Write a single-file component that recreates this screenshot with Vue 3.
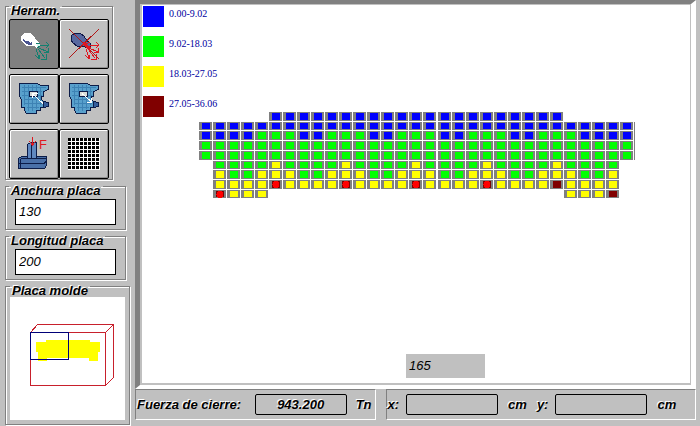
<script setup>
import { ref } from 'vue'

const width = ref('130')
const length = ref('200')
const reading = ref('165')
const tool = ref('inject')

const ranges = [
  { label: '0.00-9.02', tone: 'blue' },
  { label: '9.02-18.03', tone: 'green' },
  { label: '18.03-27.05', tone: 'yellow' },
  { label: '27.05-36.06', tone: 'maroon' }
]

// One string per row of cells: b, g, y, m are the ranges, r marks an injection point.
const rows = [
  '.....bbbbbbbbbbbbbbbbbbbbb.....',
  'bbbbbbbbbbbbbbbbbbbbbbbbbbbbbbb',
  'bbbbgggbbgggbbgggbbgggbbgggbbbb',
  'ggggggggggggggggggggggggggggggg',
  'ggggggggggggggggggggggggggggggg',
  '.ggggyggggyggggyggggyggggygggg.',
  '.yggyyyggyyyggyyyggyyyggyyyggy.',
  '.yyyyryyyyryyyyryyyyryyyymyyyy.',
  '.ryyy.....................yyym.'
]
const tones = { b: 'blue', g: 'green', y: 'yellow', m: 'maroon', r: 'maroon' }

const cells = rows.flatMap((row, j) =>
  [...row].map((k, i) => ({
    id: `${j}-${i}`,
    k,
    tone: tones[k],
    x: Math.round(i * 14.03),
    y: Math.round(j * 9.7),
    h: Math.round((j + 1) * 9.7) - Math.round(j * 9.7) - 1
  }))
).filter(c => c.k !== '.')
</script>

<template>
  <div class="app">
    <aside class="side">
      <fieldset class="group tools">
        <legend>Herram.</legend>
        <div class="buttons">
          <button type="button" aria-label="Inyectar" :class="{ on: tool === 'inject' }" @click="tool = 'inject'">
            <svg viewBox="0 0 48 48">
              <path d="M11 17l1-2 3-2h5l4 3 3 5 3 2v4l-3 1-3-2h-7l-4-3-2-3z" fill="#fff" />
              <path d="M13 19l2 2h3l2 2 2-1v3h-3l-3-1-3-3z" fill="#4a5490" />
              <path d="M27 23l3 1v3l-3 1z" fill="#d8f4ee" />
              <g class="line" stroke="#128070">
                <path d="M26 24l4-1M27 28l3-2M30 25h9M36 22l3 3-3 3M29 28l9 4M38 28v4h-4M28 29l7 9M36 34v5h-5M26 29l3 9M25 35l4 4 1-4" />
              </g>
            </svg>
          </button>
          <button type="button" aria-label="Anular inyección" :class="{ on: tool === 'none' }" @click="tool = 'none'">
            <svg viewBox="0 0 48 48">
              <path d="M11 17l1-2 3-2h5l4 3 3 5 3 2v4l-3 1-3-2h-7l-4-3-2-3z" fill="#5868a0" stroke="#101848" />
              <g class="line" stroke="#e01820">
                <path d="M26 24l4-2M27 28l3-2M30 25h9M36 22l3 3-3 3M29 28l9 4M38 28v4h-4M28 29l7 9M36 34v5h-5M26 29l3 9M25 35l4 4 1-4" />
              </g>
              <path d="M9 9l30 30M39 9L9 38" stroke="#b01818" />
              <path d="M23 23l7 6" stroke="#e01820" stroke-width="3" />
            </svg>
          </button>
          <button v-for="n in 2" :key="n" type="button" :aria-label="n === 1 ? 'Mover hacia dentro' : 'Mover hacia fuera'">
            <svg viewBox="0 0 48 48">
              <path d="M9.500 8.500h18l3 2h8v4l-5 2v5h-2v3l2 2v6h-3v3h-4v3h-10l-2-3v-3h-3v-8l-2-3z" fill="#58a0cc" stroke="#0c1c48" />
              <g class="line" stroke="#3d82b4">
                <path d="M12 12.500h24M12 16.500h20M12 20.500h20M14 24.500h17M14 28.500h18M17 32.500h12M14.500 10v20M18.500 10v26M22.500 10v26M26.500 10v24M30.500 12v18" />
              </g>
              <path d="M33.500 26.500l5 1v4l-5 1z" fill="#365f9c" stroke="#0c1c48" />
              <rect x="19.500" y="16.500" width="8" height="5" fill="#d8dcd8" stroke="#0c1c48" />
              <path v-if="n === 1" d="M22 18.500l11 10M22.500 23v-4.500h5" stroke="#fff" />
              <path v-else d="M22 18.500l9 8M31.500 23v4.500h-5" stroke="#fff" />
            </svg>
          </button>
          <button type="button" aria-label="Fuerza">
            <svg viewBox="0 0 48 48">
              <path d="M8.500 28.500l3-2h25v9l-2 3h-26z" fill="#4a70a8" stroke="#0c1c48" />
              <path d="M9 33.500h25l3-3M11 28.500h25M10.500 29v9" stroke="#0c1c48" />
              <path d="M17.500 14.500l3-2h6v16h-9z" fill="#6088c0" stroke="#0c1c48" />
              <path d="M21.500 15v13" stroke="#0c1c48" />
              <path d="M22.500 7v8M19 11l3.500 4 3.500-4" stroke="#e01820" />
              <text x="29" y="19" fill="#e01820" class="force">F</text>
            </svg>
          </button>
          <button type="button" aria-label="Malla">
            <svg viewBox="0 0 48 48">
              <rect x="8" y="8" width="32" height="32" fill="#fff" />
              <template v-for="r in 8" :key="r">
                <rect v-for="c in 8" :key="c" :x="c * 4 + 4" :y="r * 4 + 4" width="3" height="3" fill="#000" />
              </template>
            </svg>
          </button>
        </div>
      </fieldset>

      <fieldset class="group size">
        <legend><label for="plate-width">Anchura placa</label></legend>
        <input id="plate-width" v-model="width" type="text" />
      </fieldset>

      <fieldset class="group size">
        <legend><label for="plate-length">Longitud placa</label></legend>
        <input id="plate-length" v-model="length" type="text" />
      </fieldset>

      <fieldset class="group plate">
        <legend>Placa molde</legend>
        <svg class="preview" viewBox="0 0 115 123" role="img" aria-label="Placa molde">
          <path d="M26 45h10v-2h44v2h10v10h-2v9h-9v-3H37v3h-9v-9h-2z" fill="#ff0" />
          <path d="M20.500 35.500h75v53h-75zM20.500 35.500l7-8h76v53l-8 8M95.500 35.500l8-8" stroke="#c8202c" />
          <path d="M20.500 35.500h38v27h-38z" stroke="#000078" />
        </svg>
      </fieldset>
    </aside>

    <main class="main">
      <section class="well">
        <div class="canvas">
          <ul class="ranges">
            <li v-for="r in ranges" :key="r.label">
              <span class="swatch" :class="r.tone"></span>
              <span>{{ r.label }}</span>
            </li>
          </ul>
          <svg class="map" width="436" height="87" viewBox="0 0 436 87" role="img" aria-label="Mapa de presiones">
            <g v-for="c in cells" :key="c.id">
              <rect :x="c.x" :y="c.y" width="13" :height="c.h" fill="#808080" />
              <rect :x="c.x + 3" :y="c.y + 1" width="8" :height="c.h - 2" :class="c.tone" />
              <circle v-if="c.k === 'r'" :cx="c.x + 7" :cy="c.y + 4.5" r="3.5" fill="#f00" />
            </g>
            <rect x="435" y="10" width="1" height="38" fill="#808080" />
          </svg>
          <input v-model="reading" class="reading" type="text" aria-label="Lectura" />
        </div>
      </section>

      <footer class="status">
        <div class="panel force-panel">
          <label for="force">Fuerza de cierre:</label>
          <output id="force" class="box">943.200</output>
          <span class="unit">Tn</span>
        </div>
        <div class="panel coords">
          <label for="pos-x">x:</label>
          <output id="pos-x" class="box"></output>
          <span class="unit">cm</span>
          <label for="pos-y">y:</label>
          <output id="pos-y" class="box"></output>
          <span class="unit">cm</span>
        </div>
      </footer>
    </main>
  </div>
</template>

<style>
body {
  background: #c0c0c0;
}
</style>

<style scoped>
* {
  box-sizing: border-box;
}

.app {
  display: flex;
  min-height: 100vh;
  background: #c0c0c0;
  color: #000;
  font: italic bold 13px/13px "Liberation Sans", Arial, sans-serif;
}

.side {
  flex: none;
  width: 135px;
  padding: 0 5px;
}

.group {
  min-width: 0;
  margin: 0 4px 0 0;
  padding: 6px 3px 0;
  border: 1px solid #808080;
  box-shadow: 1px 1px 0 #fff, inset 1px 1px 0 #fff;
}

legend {
  box-sizing: content-box;
  height: 9px;
  padding: 4px 2px 0;
  background: #c0c0c0 content-box;
  white-space: nowrap;
}

legend,
.panel {
  text-shadow: -1px -1px 0 #fff;
}

.tools {
  margin-right: 17px;
}

.buttons {
  display: grid;
  grid-template-columns: repeat(2, 50px);
  row-gap: 5px;
}

button {
  height: 50px;
  padding: 0;
  border: 1px solid #000;
  border-radius: 2px;
  background: #c0c0c0;
  box-shadow: inset 1px 1px 0 #fff, inset -1px -1px 0 #909090;
}

button.on {
  background: #808080;
  box-shadow: none;
}

button svg {
  display: block;
  width: 48px;
  height: 48px;
  fill: none;
  shape-rendering: crispEdges;
}

.line {
  stroke-width: 1;
}

.force {
  font: normal 13px "Liberation Sans", Arial, sans-serif;
}

.size {
  padding-bottom: 4px;
}

.size input {
  display: block;
  width: calc(100% - 12px);
  height: 26px;
  margin: 0 6px;
  padding: 0 3px 2px;
  border: 1px solid #000;
  background: #fff;
}

.size input,
.reading {
  border-radius: 0;
  color: #000;
  font: italic 13px/15px "Liberation Sans", Arial, sans-serif;
}

.plate {
  margin-right: 0;
  padding: 4px;
}

.preview {
  display: block;
  width: 100%;
  background: #fff;
  fill: none;
  shape-rendering: crispEdges;
}

.main {
  display: flex;
  flex: 1;
  flex-direction: column;
  min-width: 0;
  padding: 0 4px 6px 0;
}

.well {
  display: flex;
  flex: 1;
  border-style: solid;
  border-width: 4px 5px 4px 5px;
  border-color: #808080 #fff #fff #808080;
}

.canvas {
  display: grid;
  flex: 1;
  grid-template-rows: 1fr auto;
  border: 1px solid #c0c0c0;
  border-width: 1px 1px 2px 2px;
  background: #fff;
}

.ranges {
  grid-area: 1 / 1;
  display: grid;
  align-content: start;
  gap: 9px;
  margin: 0;
  padding: 1px;
  list-style: none;
  color: #0000a0;
  font: 10px/15px "Liberation Serif", "Times New Roman", serif;
}

.ranges li {
  display: flex;
  gap: 5px;
}

.swatch {
  width: 21px;
  height: 21px;
}

.map {
  grid-area: 1 / 1;
  margin: 107px 0 0 57px;
  shape-rendering: crispEdges;
}

.blue {
  background: #00f;
  fill: #00f;
}

.green {
  background: #0f0;
  fill: #0f0;
}

.yellow {
  background: #ff0;
  fill: #ff0;
}

.maroon {
  background: #800000;
  fill: #800000;
}

.reading {
  width: 79px;
  height: 24px;
  margin: 0 0 5px 264px;
  padding: 0 3px 1px;
  border: 0;
  background: #c0c0c0;
}

.status {
  display: flex;
  gap: 10px;
}

.panel {
  display: flex;
  align-items: center;
  height: 31px;
  padding: 0 1px;
  border: 1px solid;
  border-color: #808080 #fff #fff #808080;
  white-space: nowrap;
}

.force-panel {
  flex: 240 1 0;
}

.coords {
  flex: 311 1 0;
}

.box {
  flex: none;
  width: 92px;
  height: 21px;
  border: 1px solid #000;
  border-radius: 2px;
  line-height: 19px;
  text-align: center;
}

.force-panel .box {
  margin: 0 9px 0 auto;
}

.force-panel .unit {
  margin-right: 2px;
}

.coords .box {
  margin: 0 10px 0 7px;
}

.coords .unit {
  margin-right: 10px;
}
</style>
